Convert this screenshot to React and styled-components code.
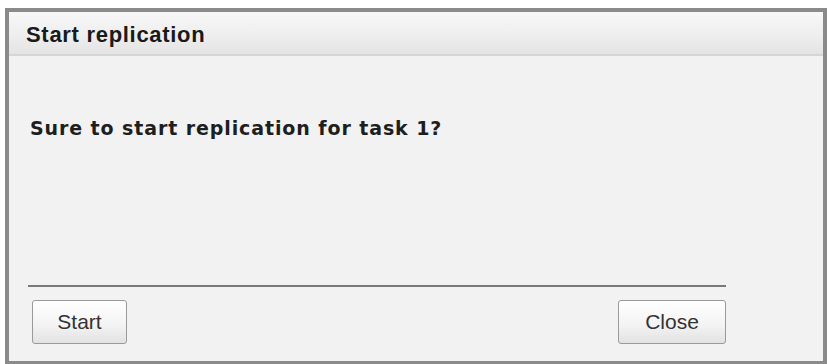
import React from 'react';
import styled, { createGlobalStyle } from 'styled-components';

const GlobalStyle = createGlobalStyle`
  html, body {
    margin: 0;
    padding: 0;
    background: #ffffff;
  }
`;

const Page = styled.div`
  padding: 8px 1px 0 5px;
`;

const Dialog = styled.div`
  box-sizing: border-box;
  width: 822px;
  height: 356px;
  border: 4px solid #8a8a8a;
  border-bottom-width: 3px;
  background: #f2f2f2;
  display: flex;
  flex-direction: column;
`;

const TitleBar = styled.div`
  box-sizing: border-box;
  height: 44px;
  display: flex;
  align-items: center;
  padding: 4px 0 0 17px;
  background: linear-gradient(to bottom, #f7f7f7 0%, #efefef 50%, #e4e4e4 100%);
  border-bottom: 2px solid #d6d6d6;
  font-family: "Liberation Sans", Arial, sans-serif;
  font-weight: 700;
  font-size: 22px;
  letter-spacing: 0.7px;
  color: #1a1a1a;
`;

const Body = styled.div`
  flex: 1;
  display: flex;
  flex-direction: column;
  padding: 0 97px 0 19px;
`;

const Message = styled.p`
  margin: 61px 0 0 2px;
  font-family: "DejaVu Sans", Verdana, sans-serif;
  font-weight: 700;
  font-size: 19px;
  letter-spacing: 0.9px;
  color: #1e1e1e;
`;

const Divider = styled.hr`
  margin: auto 0 0 0;
  border: none;
  height: 2px;
  background: #7a7a7a;
`;

const Footer = styled.div`
  display: flex;
  justify-content: space-between;
  padding: 13px 0 17px 4px;
`;

const Button = styled.button`
  box-sizing: border-box;
  width: ${({ $w }) => $w}px;
  height: 44px;
  border: 1px solid #9a9a9a;
  border-radius: 3px;
  background: linear-gradient(to bottom, #ffffff 0%, #f4f4f4 55%, #e2e2e2 100%);
  font-family: "Liberation Sans", Arial, sans-serif;
  font-size: 21px;
  color: #333;
  padding: 0;
`;

export default function App() {
  return (
    <Page>
      <GlobalStyle />
      <Dialog>
        <TitleBar>Start replication</TitleBar>
        <Body>
          <Message>Sure to start replication for task 1?</Message>
          <Divider />
          <Footer>
            <Button $w={95}>Start</Button>
            <Button $w={108}>Close</Button>
          </Footer>
        </Body>
      </Dialog>
    </Page>
  );
}
